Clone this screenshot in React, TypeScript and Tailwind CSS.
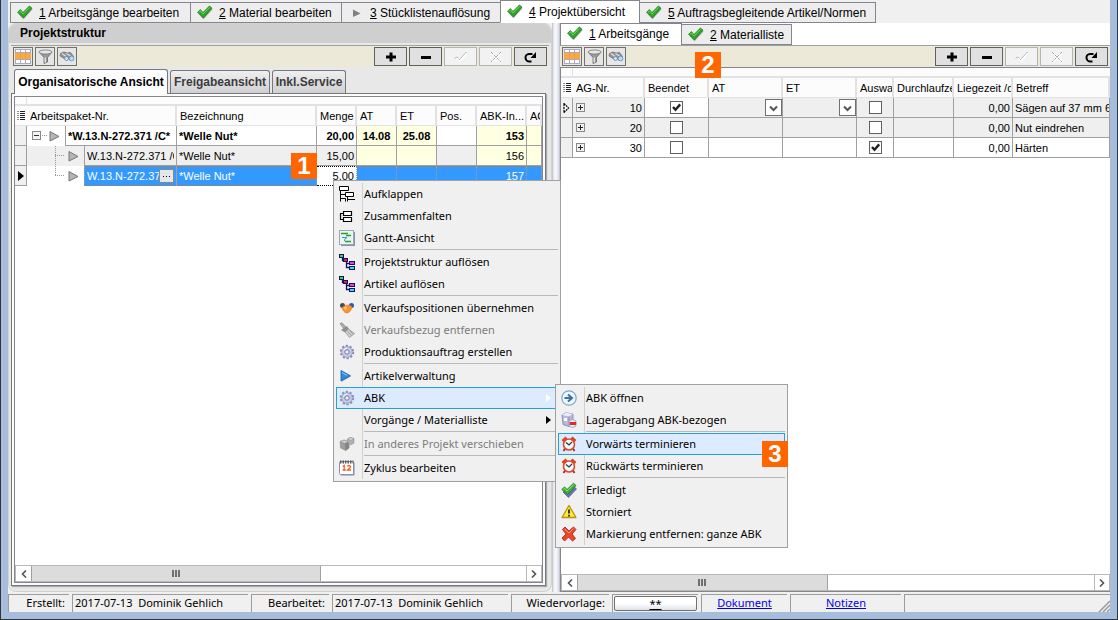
import React from "react";

type Children = { children?: React.ReactNode };

/* ---------- icons ---------- */

const Tick = () => (
  <svg width="16" height="16" viewBox="0 0 16 16" className="shrink-0">
    <path d="M1.500 9 L6.500 14.500 L15.500 4.500 L14 3 Z" fill="#8a8a8a" opacity=".6" />
    <path d="M.6 7.200 L3.400 4.600 L6 7.600 L12.400 1 L15 3.200 L6.400 13 Z" fill="#2fa52a" stroke="#1d7c1a" strokeWidth=".8" />
    <path d="M2 7.200 L3.500 5.900 L6 8.900 L12.500 2.300" fill="none" stroke="#7fdc62" strokeWidth=".9" />
  </svg>
);

const GreyArrow = () => (
  <svg width="16" height="16" viewBox="0 0 16 16" className="shrink-0">
    <path d="M5 4.500 L12.500 8.500 L5 12 Z" fill="#808080" />
  </svg>
);

const GridIcon = () => (
  <svg width="18" height="17" viewBox="0 0 18 17">
    <rect x="1" y="1" width="16" height="15" fill="#fff" />
    <rect x="1" y="5" width="16" height="6" fill="#fba93d" />
    <path d="M1 1.500H17M1 4.500H17M1 11.500H17M1 15.500H17" stroke="#a9a9c4" />
    <path d="M1.500 1V5M6.500 1V5M11.500 1V5M16.500 1V5M1.500 11V16M6.500 11V16M11.500 11V16M16.500 11V16" stroke="#a9a9c4" />
    <path d="M6.500 5V11M11.500 5V11" stroke="#e9a04a" />
  </svg>
);

const FunnelIcon = () => (
  <svg width="18" height="17" viewBox="0 0 18 17">
    <path d="M3 4 L8 9.500 V15.500 L11.500 14 V9.500 L16 4 Z" fill="#9a9a9a" stroke="#666" strokeWidth=".8" />
    <path d="M9.200 9.500 V14.500" stroke="#ededed" strokeWidth="1.300" />
    <ellipse cx="9.500" cy="4" rx="6.500" ry="2" fill="#e6e6e6" stroke="#777" strokeWidth=".8" />
  </svg>
);

const BinocularsIcon = () => (
  <svg width="18" height="17" viewBox="0 0 18 17">
    <path d="M2.500 5.500 L6 4 L9 5 L12.500 4.500 L15.500 8.500 L13 12 L10 10.500 L7 11 L2 8 Z" fill="#8f9498" stroke="#666" strokeWidth=".7" />
    <path d="M4 5.500 L8 8.500 M8.500 5.500 L12.500 8" stroke="#e0e0e0" strokeWidth="1.200" />
    <circle cx="8.500" cy="10.500" r="2" fill="#cfe6fa" stroke="#5d7a98" strokeWidth=".7" />
    <circle cx="13.500" cy="10.500" r="2.400" fill="#b9dcfb" stroke="#5d7a98" strokeWidth=".7" />
  </svg>
);

const PlusIcon = () => (
  <svg width="16" height="16" viewBox="0 0 16 16"><path d="M3 8H13M8 3.500V12.500" stroke="#000" strokeWidth="3" /></svg>
);
const MinusIcon = () => (
  <svg width="16" height="16" viewBox="0 0 16 16"><path d="M3 8.500H13" stroke="#000" strokeWidth="3" /></svg>
);
const CommitIcon = () => (
  <svg width="16" height="16" viewBox="0 0 16 16" fill="none">
    <path d="M3 10 L5 8 L7 12 L14 4" stroke="#fff" strokeWidth="2" />
    <path d="M2 9.500 L4 7.500 L6.500 10.500 L13.500 3" stroke="#9a9a9a" strokeDasharray="2 1" />
  </svg>
);
const CancelIcon = () => (
  <svg width="16" height="16" viewBox="0 0 16 16" fill="none">
    <path d="M4 4 L13 13 M13 4 L4 13" stroke="#fff" strokeWidth="2" />
    <path d="M3 3 L13 13 M13 3 L3 13" stroke="#a4a4a4" strokeDasharray="3 1" />
  </svg>
);
const RefreshIcon = () => (
  <svg width="16" height="16" viewBox="0 0 16 16" fill="none">
    <path d="M8.500 12.500 H6.500 A3.700 3.700 0 0 1 6 5 H9.500" stroke="#000" strokeWidth="2" />
    <path d="M13 3 V9 H7.500 Z" fill="#000" />
  </svg>
);

const ListIcon = () => (
  <svg width="8" height="10" viewBox="0 0 8 10" className="shrink-0">
    <path d="M.5 .5H1.500M.5 2.500H1.500M.5 4.500H1.500M.5 6.500H1.500M.5 8.500H1.500" stroke="#222" />
    <path d="M3 .5H8M3 2.500H8M3 4.500H8M3 6.500H8M3 8.500H8" stroke="#222" />
  </svg>
);

const TreeTriangle = ({ x }: { x: number }) => (
  <path d={`M${x} 5.500 L${x + 9} 10.500 L${x} 15 Z`} fill="#b4b4b4" stroke="#777" />
);

const UnfoldIcon = () => (
  <svg width="16" height="16" viewBox="0 0 16 16" fill="none" stroke="#000">
    <path d="M.5 .5H9.500V4.500H.5ZM6.500 6.500H14.500V10.500H6.500Z" fill="#fff" />
    <path d="M1.500 5V15.500M1.500 8.500H6M2 12.500H6.500V15.500M8.500 11V15.500M8.500 13.500H16" />
  </svg>
);
const FoldIcon = () => (
  <svg width="16" height="16" viewBox="0 0 16 16" fill="none" stroke="#000" strokeWidth="1.200">
    <path d="M4.500 3.500H12.500V7.500H4.500ZM4.500 9.500H12.500V13.500H4.500Z" fill="#fff" />
    <path d="M4 5.500H1.500V11.500H4" />
  </svg>
);
const GanttIcon = () => (
  <svg width="16" height="16" viewBox="0 0 16 16">
    <rect x="2" y="2" width="14" height="14" fill="#8792a4" />
    <rect x=".5" y=".5" width="14" height="14" fill="#eaf4f0" stroke="#9aa8bc" />
    <path d="M2 3.500H9M7 5.500H12M6 11.500H12" stroke="#25a32d" strokeWidth="1.500" />
    <path d="M3 7.500H8L5.500 9.500V11" stroke="#3f8fc4" fill="none" />
  </svg>
);
const TreeIcon = () => (
  <svg width="16" height="16" viewBox="0 0 16 16" stroke="#10106a">
    <path d="M3.500 4V6.500H6M7.500 8V13.500H11M8 9.500H11" fill="none" strokeWidth="1.300" />
    <rect x=".5" y=".5" width="4" height="3" fill="#2ee02e" />
    <rect x="4.500" y="4.500" width="4" height="3" fill="#f02020" />
    <rect x="10.500" y="7.500" width="5" height="3" fill="#f040d0" />
    <rect x="10.500" y="12.500" width="5" height="3" fill="#3adcea" />
  </svg>
);
const PeopleIcon = () => (
  <svg width="16" height="16" viewBox="0 0 16 16">
    <circle cx="3.500" cy="5.500" r="2.500" fill="#4a4a52" />
    <circle cx="12.500" cy="5.500" r="2.500" fill="#3159a8" />
    <path d="M3 7.500C5 5 11 4 13 7C12 11 10 13 7.500 13C5 12.500 3.500 10 3 7.500Z" fill="#f79430" stroke="#d8741c" strokeWidth=".6" />
    <circle cx="6.500" cy="8" r="1.500" fill="#ffc27a" />
  </svg>
);
const BrushIcon = () => (
  <svg width="16" height="16" viewBox="0 0 16 16" stroke="#8a8a8a" strokeWidth=".7">
    <path d="M1 1.500 L3 .8 L7 5 L5 7Z" fill="#aaa" />
    <path d="M2.500 8L8 4.500L9.500 7L6 10Z" fill="#8f8f8f" />
    <path d="M6 10L9.500 7L15.500 11.500L10.500 15.500Z" fill="#cfcfcf" />
    <path d="M8.500 9.500L12.500 13.500M10.500 8.500L14 12" />
  </svg>
);
const GearIcon = () => (
  <svg width="16" height="16" viewBox="0 0 16 16">
    <circle cx="8" cy="8" r="6.200" fill="none" stroke="#8a8fb8" strokeWidth="2" strokeDasharray="2.200 1.690" />
    <circle cx="8" cy="8" r="5.300" fill="#c6cae6" stroke="#8a8fb8" strokeWidth=".7" />
    <circle cx="8" cy="8" r="2.200" fill="#f0f0f0" stroke="#7278a4" />
    <path d="M4.500 6.500A4 4 0 0 1 8 4" stroke="#fff" fill="none" />
  </svg>
);
const PlayIcon = () => (
  <svg width="16" height="16" viewBox="0 0 16 16">
    <path d="M2.500 3.500L12 8.500L2.500 14Z" fill="#bbb" />
    <path d="M2 2.500L11.500 7.800L2 13Z" fill="#2b8be0" stroke="#1b5fa8" strokeWidth=".8" />
    <path d="M3 4.500L8 7.300" stroke="#8fd0ff" />
  </svg>
);
const CubesIcon = () => (
  <svg width="16" height="16" viewBox="0 0 16 16" stroke="#8b8b8b" strokeWidth=".5">
    <path d="M1 5.500L5 4L10 5.500V12L6.500 14.500L1.500 12Z" fill="#9e9e9e" />
    <path d="M1 5.500L5 4L10 5.500L6 7.500Z" fill="#cfcfcf" />
    <path d="M6 7.500L6.500 14.500L10 12V5.500Z" fill="#858585" />
    <path d="M8.500 3L11 1.500L15 2.500V7L12 9L9 7Z" fill="#b0b0b0" />
    <path d="M8.500 3L11 1.500L15 2.500L12 4.500Z" fill="#d6d6d6" />
  </svg>
);
const CalendarIcon = () => (
  <svg width="16" height="16" viewBox="0 0 16 16">
    <rect x="1.500" y="2.500" width="14" height="13" rx="1" fill="#7b84a0" />
    <rect x=".5" y="1.500" width="14" height="13" rx="1" fill="#fff" stroke="#8790ac" />
    <path d="M1 2H14.500" stroke="#555" strokeWidth="3" strokeDasharray="1.500 1" />
    <path d="M3.800 6.500L5.200 5.500V10M3.500 10H6.800M8.500 6.500C9 5 12 5.200 11.500 7.200L8.500 10H12" stroke="#f0601c" strokeWidth="1.300" fill="none" />
  </svg>
);
const OpenIcon = () => (
  <svg width="16" height="16" viewBox="0 0 16 16" fill="none">
    <circle cx="8" cy="8" r="7.200" fill="#eef5fb" stroke="#7da6cd" strokeWidth="1.200" />
    <path d="M3.500 8H11M7 4.500L11 8L7 11.500" stroke="#3f6f9f" strokeWidth="2" />
  </svg>
);
const StockIcon = () => (
  <svg width="16" height="16" viewBox="0 0 16 16">
    <path d="M1 3L5 .8L12 2V11L8 14.500L2 12.500Z" fill="#b6b8dc" stroke="#7c80ae" strokeWidth=".8" />
    <path d="M1 3L8 4.500L12 2L5 .8Z" fill="#ececfa" />
    <path d="M8 4.500V14" stroke="#7c80ae" strokeWidth=".8" />
    <rect x="3" y="6" width="3" height="3" fill="#fff" />
    <circle cx="11.500" cy="11.500" r="4" fill="#e6e6f6" stroke="#8c90b8" strokeWidth=".7" />
    <rect x="8.500" y="10" width="6.500" height="3" fill="#dc2c1c" />
  </svg>
);
const ClockIcon = () => (
  <svg width="16" height="16" viewBox="0 0 16 16" fill="none">
    <path d="M1.500 5L5.500 1.500M14.500 5L10.500 1.500" stroke="#e2401c" strokeWidth="2.800" />
    <path d="M4 12.500L2.500 15M12 12.500L13.500 15" stroke="#a82a18" strokeWidth="1.800" />
    <circle cx="8" cy="8.500" r="5.500" fill="#f4fbff" stroke="#dc4a2a" strokeWidth="1.600" />
    <path d="M5 6.500L8 9L11 6" stroke="#333" strokeWidth="1.200" />
  </svg>
);
const DoneIcon = () => (
  <svg width="16" height="16" viewBox="0 0 16 16">
    <path d="M2 10L4.500 8L7 11L13.500 5L15.500 7L7.500 15.500Z" fill="#6a74b4" stroke="#444c8c" strokeWidth=".6" />
    <path d="M.8 7.500L3.500 4.800L6 7.500L12.500 1.200L15 3.600L6.500 12.500Z" fill="#3fb335" stroke="#1f7c1c" strokeWidth=".8" />
    <path d="M2.200 7.300L3.500 6.200L6 9L12.500 2.700" fill="none" stroke="#8ee070" />
  </svg>
);
const WarningIcon = () => (
  <svg width="16" height="16" viewBox="0 0 16 16">
    <path d="M8 1.500L15 13.500H1Z" fill="#ffe640" stroke="#b8980c" strokeWidth="1.300" strokeLinejoin="round" />
    <path d="M8 5.500V9.500M8 10.800V12.500" stroke="#222" strokeWidth="1.700" />
  </svg>
);
const CrossIcon = () => (
  <svg width="16" height="16" viewBox="0 0 16 16">
    <path d="M4 1L8 5L12.500 1L15 3.500L11 8L14.500 12.500L11.500 15L7.500 11L3.500 15L1 12L5 8L1.500 3.500Z" fill="#ee4428" stroke="#b0261a" strokeWidth=".9" />
    <path d="M3.500 3L8 7L12.500 2.500" stroke="#ff9c80" fill="none" />
  </svg>
);

/* ---------- shared pieces ---------- */

const Badge = ({ children, className }: Children & { className: string }) => (
  <span
    className={`absolute z-30 flex h-[26px] w-[26px] items-center justify-center bg-[#ff6600] font-['Liberation_Sans',Arial,sans-serif] text-[24px] leading-none font-bold text-white ${className}`}
  >
    {children}
  </span>
);

function PageTab({ n, label, active, grey, className }: { n: string; label: string; active?: boolean; grey?: boolean; className: string }) {
  return (
    <button
      role="tab"
      aria-selected={!!active}
      className={`-ml-px flex shrink-0 items-center gap-1.5 border border-[#85858f] pl-1.5 text-left text-[12px] whitespace-nowrap first:ml-0 ${
        active ? "h-full border-b-white bg-white" : "h-[21px] bg-[#ededed]"
      } ${className}`}
    >
      {grey ? <GreyArrow /> : <Tick />}
      <span>
        <u>{n}</u> {label}
      </span>
    </button>
  );
}

function Toolbar() {
  const small = "flex h-[19px] w-5 items-center justify-center border border-[#707070] bg-[#e6e6e6]";
  const wide = "flex h-[19px] w-[33px] items-center justify-center border border-[#606060] bg-[#e0e0e0]";
  const off = "flex h-[19px] w-[33px] items-center justify-center border border-[#b4b4b4] bg-[#f2f2f2]";
  return (
    <div role="toolbar" className="flex h-[22px] shrink-0 items-center justify-between border-t border-[#a0a0a0] bg-[#ece9d8] px-0.5">
      <div className="flex gap-0.5">
        <button aria-label="Spalten" className={small}><GridIcon /></button>
        <button aria-label="Filter" className={small}><FunnelIcon /></button>
        <button aria-label="Suchen" className={small}><BinocularsIcon /></button>
      </div>
      <div className="flex gap-0.5">
        <button aria-label="Hinzufügen" className={wide}><PlusIcon /></button>
        <button aria-label="Löschen" className={wide}><MinusIcon /></button>
        <button aria-label="Übernehmen" disabled className={off}><CommitIcon /></button>
        <button aria-label="Abbrechen" disabled className={off}><CancelIcon /></button>
        <button aria-label="Aktualisieren" className={wide}><RefreshIcon /></button>
      </div>
    </div>
  );
}

function ScrollBar({ thumb }: { thumb: string }) {
  const end = "flex w-4 shrink-0 items-center justify-center border-[#b8b8b8]";
  return (
    <div className="mt-auto flex h-[17px] shrink-0 border-y border-[#b8b8b8] bg-white">
      <button aria-label="Nach links" className={`${end} border-l`}>
        <svg width="6" height="8" viewBox="0 0 6 8"><path d="M5 .5L1.500 4L5 7.500" fill="none" stroke="#555" strokeWidth="1.600" /></svg>
      </button>
      <div className="flex-1">
        <div className={`flex h-full items-center justify-center gap-px border-x border-[#a0a0a0] bg-[#dcdcdc] ${thumb}`}>
          <i className="h-[7px] w-0.5 bg-[#707070]" />
          <i className="h-[7px] w-0.5 bg-[#707070]" />
          <i className="h-[7px] w-0.5 bg-[#707070]" />
        </div>
      </div>
      <button aria-label="Nach rechts" className={`${end} border-x`}>
        <svg width="6" height="8" viewBox="0 0 6 8"><path d="M1 .5L4.500 4L1 7.500" fill="none" stroke="#555" strokeWidth="1.600" /></svg>
      </button>
    </div>
  );
}

const Head = ({ children }: Children) => (
  <th className="h-5 border-r-2 border-b border-r-[#e2e2e2] border-b-[#e2e2e2] bg-[#fcfcfc] py-0 pr-0 pl-[3px] text-left font-normal">
    <div className="overflow-hidden whitespace-nowrap">{children}</div>
  </th>
);

const MarkerHead = () => (
  <th aria-label="Markierung" className="h-5 border-b border-[#e2e2e2] bg-[#fcfcfc] py-0 pr-0 pl-0.5 text-left">
    <ListIcon />
  </th>
);

const cell = "h-5 overflow-hidden border-r border-b border-[#a0a0a0] whitespace-nowrap";

const Cell = ({ children, className = "" }: Children & { className?: string }) => (
  <td className={`${cell} ${className}`}>{children}</td>
);

/* ---------- left side ---------- */

function TreeCell({ level, text, last, bg, className }: { level: 0 | 1; text: React.ReactNode; last?: boolean; bg: string; className: string }) {
  return (
    <td className={`h-5 overflow-hidden border-r border-[#a0a0a0] p-0 ${bg}`}>
      <div className="flex h-5">
        <svg width={level ? 57 : 38} height="20" viewBox={level ? "0 0 57 20" : "0 0 38 20"} fill="none" className="shrink-0">
          {level === 0 ? (
            <>
              <rect x="5.500" y="5.500" width="8" height="8" fill="#f4f4f4" stroke="#8a8a8a" />
              <path d="M7 9.500H12" stroke="#333" />
              <path d="M15 9.500H20" stroke="#999" strokeDasharray="1 1" />
              <TreeTriangle x={23} />
            </>
          ) : (
            <>
              <path d={last ? "M28.500 0V10M28 9.500H38" : "M28.500 0V20M28 9.500H38"} stroke="#999" strokeDasharray="1 1" />
              <TreeTriangle x={42} />
            </>
          )}
        </svg>
        <div className={`flex h-5 min-w-0 flex-1 items-center border-b border-l border-[#a0a0a0] px-0.5 ${className}`}>
          <div className="min-w-0 flex-1 overflow-hidden whitespace-nowrap">{text}</div>
          {last && (
            <button aria-label="Auswählen" className="flex h-3.5 w-[15px] shrink-0 items-center justify-center gap-0.5 border border-[#888] bg-[#e6e6e6]">
              <i className="h-px w-px bg-black" />
              <i className="h-px w-px bg-black" />
              <i className="h-px w-px bg-black" />
            </button>
          )}
        </div>
      </div>
    </td>
  );
}

function StructureTable() {
  const y = "bg-[#ffffe1]";
  const sel = "border-y border-t-[#c07830] border-b-[#c07830] border-dotted bg-[#3399ff] text-white";
  return (
    <table className="w-full min-w-[526px] table-fixed border-separate border-spacing-0 text-[11px] leading-[18px]">
      <colgroup>
        <col className="w-[12px]" />
        <col className="w-[150px]" />
        <col className="w-[140px]" />
        <col className="w-[40px]" />
        <col className="w-[40px]" />
        <col className="w-[40px]" />
        <col className="w-[40px]" />
        <col className="w-[50px]" />
        <col />
      </colgroup>
      <thead>
        <tr>
          <MarkerHead />
          <Head>Arbeitspaket-Nr.</Head>
          <Head>Bezeichnung</Head>
          <Head>Menge</Head>
          <Head>AT</Head>
          <Head>ET</Head>
          <Head>Pos.</Head>
          <Head>ABK-In...</Head>
          <Head>AG</Head>
        </tr>
      </thead>
      <tbody>
        <tr className="font-bold">
          <Cell className="bg-[#f0f0f0]" />
          <TreeCell level={0} text="*W.13.N-272.371 /C*" bg="bg-white" className="" />
          <Cell className="pl-0.5">*Welle Nut*</Cell>
          <Cell className="pr-0.5 text-right">20,00</Cell>
          <Cell className={`text-center ${y}`}>14.08</Cell>
          <Cell className={`text-center ${y}`}>25.08</Cell>
          <Cell />
          <Cell className={`pr-0.5 text-right ${y}`}>153</Cell>
          <Cell className={y} />
        </tr>
        <tr className="bg-[#efefef]">
          <Cell className="bg-[#f0f0f0]" />
          <TreeCell level={1} text="W.13.N-272.371 /C" bg="bg-[#efefef]" className="" />
          <Cell className="pl-0.5">*Welle Nut*</Cell>
          <Cell className="pr-0.5 text-right">15,00</Cell>
          <Cell className={y} />
          <Cell className={y} />
          <Cell />
          <Cell className={`pr-0.5 text-right ${y}`}>156</Cell>
          <Cell className={y} />
        </tr>
        <tr>
          <Cell className="bg-[#f0f0f0]">
            <svg width="6" height="10" viewBox="0 0 6 10" className="mx-auto"><path d="M0 0L6 5L0 10Z" fill="#000" /></svg>
          </Cell>
          <TreeCell
            level={1}
            last
            bg="bg-white"
            className="border-y border-y-[#c07830] border-dotted bg-[#3399ff] text-white"
            text="W.13.N-272.37"
          />
          <Cell className={`pl-0.5 ${sel}`}>*Welle Nut*</Cell>
          <Cell className="border-y border-dotted border-t-black border-b-black bg-white pr-0.5 text-right">5,00</Cell>
          <Cell className={sel} />
          <Cell className={sel} />
          <Cell className={sel} />
          <Cell className={`pr-0.5 text-right ${sel}`}>157</Cell>
          <Cell className={sel} />
        </tr>
      </tbody>
    </table>
  );
}

function StructurePanel() {
  const tab = "h-[23px] rounded-t-[3px] border border-b-0 border-[#77777f] bg-linear-to-b from-[#efefef] to-[#d0d0d4] text-[12px] font-bold whitespace-nowrap text-[#3c3c3c]";
  return (
    <section className="flex w-[544px] shrink-0 flex-col rounded-lg border border-[#d2d2d2] bg-[#e8e8e8] px-0.5 pb-[5px]">
      <h2 className="-mx-0.5 flex h-[19px] shrink-0 items-center rounded-t-lg bg-[#cfcfcf] pb-0.5 pl-[11px] text-[12px] font-bold">Projektstruktur</h2>
      <div className="mt-0.5 flex flex-1 flex-col">
        <Toolbar />
        <div role="tablist" className="mt-0.5 flex h-6 shrink-0 items-end gap-0.5 pl-[3px]">
          <button role="tab" aria-selected className="relative -mb-px h-[25px] w-[154px] rounded-t-[3px] border border-b-0 border-[#77777f] bg-[#fcfcfc] text-[12px] font-bold whitespace-nowrap">
            Organisatorische Ansicht
          </button>
          <button role="tab" aria-selected={false} className={`${tab} w-[100px]`}>Freigabeansicht</button>
          <button role="tab" aria-selected={false} className={`${tab} w-[74px]`}>Inkl.Service</button>
        </div>
        <div className="mr-[3px] flex flex-1 flex-col border border-[#77777f] bg-[#fcfcfc] p-0.5 shadow-[1px_1px_1px_#aaa]">
          <div className="flex flex-1 flex-col overflow-hidden border border-[#85858f] bg-white">
            <div className="flex h-[9px] shrink-0 border-b-2 border-[#e2e2e2] bg-[#fcfcfc]">
              <div className="w-[12px] border-r border-[#e2e2e2]" />
            </div>
            <StructureTable />
            <ScrollBar thumb="w-[58.5%]" />
          </div>
        </div>
      </div>
    </section>
  );
}

/* ---------- right side ---------- */

const Check = ({ label, on }: { label: string; on?: boolean }) => (
  <span className="relative mx-auto flex h-[13px] w-[13px]">
    <input
      type="checkbox"
      aria-label={label}
      defaultChecked={on}
      className="peer h-[13px] w-[13px] appearance-none border border-[#606060] bg-white"
    />
    <svg width="13" height="13" viewBox="0 0 13 13" className="pointer-events-none absolute inset-0 hidden peer-checked:block">
      <path d="M3 6L5.500 8.800L10.200 3.400" fill="none" stroke="#222" strokeWidth="2.400" />
    </svg>
  </span>
);

const DateDrop = ({ label }: { label: string }) => (
  <span className="relative ml-auto flex h-[17px] w-[17px]">
    <select aria-label={label} className="h-[17px] w-[17px] appearance-none border border-[#707070] bg-white text-transparent">
      <option />
    </select>
    <svg width="17" height="17" viewBox="0 0 17 17" className="pointer-events-none absolute inset-0">
      <path d="M5 7.500L8.500 11L12 7.500" fill="none" stroke="#555" strokeWidth="2" />
    </svg>
  </span>
);

const operations = [
  { nr: "10", done: true, pick: false, text: "Sägen auf 37 mm 6", bg: "bg-[#efefef]" },
  { nr: "20", done: false, pick: false, text: "Nut eindrehen", bg: "bg-[#efefef]" },
  { nr: "30", done: false, pick: true, text: "Härten", bg: "bg-white" },
];

function OperationsTable() {
  return (
    <table className="w-full min-w-[540px] table-fixed border-separate border-spacing-0 text-[11px] leading-[18px]">
      <colgroup>
        <col className="w-[12px]" />
        <col className="w-[72px]" />
        <col className="w-[64px]" />
        <col className="w-[74px]" />
        <col className="w-[74px]" />
        <col className="w-[37px]" />
        <col className="w-[60px]" />
        <col className="w-[59px]" />
        <col />
      </colgroup>
      <thead>
        <tr>
          <MarkerHead />
          <Head>AG-Nr.</Head>
          <Head>Beendet</Head>
          <Head>AT</Head>
          <Head>ET</Head>
          <Head>Auswa</Head>
          <Head>Durchlaufze</Head>
          <Head>Liegezeit /d</Head>
          <Head>Betreff</Head>
        </tr>
      </thead>
      <tbody>
        {operations.map((o, i) => (
          <tr key={o.nr} className={o.bg}>
            <Cell className="bg-[#f0f0f0]">
              {i === 0 && (
                <svg width="7" height="10" viewBox="0 0 7 10" className="mx-auto"><path d="M1 .5L5.500 5L1 9.500Z" fill="#fff" stroke="#000" strokeWidth="1.200" strokeDasharray="2 .7" /></svg>
              )}
            </Cell>
            <Cell>
              <div className="flex items-center justify-between pr-0.5 pl-[3px]">
                <button aria-label={`Arbeitsgang ${o.nr} aufklappen`}>
                  <svg width="9" height="9" viewBox="0 0 9 9"><rect x=".5" y=".5" width="8" height="8" fill="#f0f0f0" stroke="#8a8a8a" /><path d="M2 4.500H7M4.500 2V7" stroke="#222" /></svg>
                </button>
                {o.nr}
              </div>
            </Cell>
            <Cell className={i === 0 ? "bg-white" : ""}><Check label={`Beendet ${o.nr}`} on={o.done} /></Cell>
            <Cell>{i === 0 && <DateDrop label="AT" />}</Cell>
            <Cell>{i === 0 && <DateDrop label="ET" />}</Cell>
            <Cell><Check label={`Auswahl ${o.nr}`} on={o.pick} /></Cell>
            <Cell />
            <Cell className="pr-0.5 text-right">0,00</Cell>
            <Cell className="pl-0.5">{o.text}</Cell>
          </tr>
        ))}
      </tbody>
    </table>
  );
}

function OperationsPanel() {
  return (
    <section className="relative flex min-w-0 flex-1 flex-col bg-white">
      <div role="tablist" className="flex h-[22px] shrink-0 items-end border-l border-[#85858f]">
        <PageTab n="1" label="Arbeitsgänge" active className="w-[121px] border-l-0" />
        <PageTab n="2" label="Materialliste" className="w-[111px]" />
      </div>
      <Toolbar />
      <div className="flex flex-1 flex-col overflow-hidden border border-r-0 border-[#85858f]">
        <div className="flex h-[10px] shrink-0 border-b-2 border-[#e2e2e2] bg-[#fcfcfc]">
          <div className="w-[12px] border-r border-[#e2e2e2]" />
        </div>
        <OperationsTable />
        <ScrollBar thumb="w-[48.5%]" />
      </div>
      <Badge className="top-[29px] left-[135px]">2</Badge>
    </section>
  );
}

/* ---------- context menu ---------- */

function Item({ icon, label, off, hot, sub, white }: { icon?: React.ReactNode; label: string; off?: boolean; hot?: boolean; sub?: boolean; white?: boolean }) {
  return (
    <button
      role="menuitem"
      disabled={off}
      className={`flex h-[22px] w-full items-center border text-left whitespace-nowrap ${
        hot ? "border-[#26a0da] bg-[#dcebff]" : "border-transparent"
      } ${off ? "text-[#7c7c7c]" : "text-black"}`}
    >
      <span className="flex w-[27px] shrink-0 pl-0.5">{icon}</span>
      <span className="flex-1">{label}</span>
      {sub && (
        <svg width="5" height="8" viewBox="0 0 5 8" className="mr-1.5"><path d="M0 0L5 4L0 8Z" fill={white ? "#fff" : "#000"} /></svg>
      )}
    </button>
  );
}

const Rule = () => <div role="separator" className="ml-7 h-0.5 border-t border-[#b9b9b9]" />;

const menuBox = "absolute border border-[#a0a0a0] bg-[#f0f0f0] bg-linear-to-r from-[#d0d0d0] to-[#d0d0d0] bg-[size:1px_calc(100%-4px)] bg-[position:28px_2px] bg-no-repeat p-0.5 font-['Noto_Sans','Open_Sans',sans-serif] text-[11px] leading-5";

function ContextMenu() {
  return (
    <div role="menu" className={`${menuBox} top-[180px] left-[332px] z-10 w-[228px]`}>
      <Item icon={<UnfoldIcon />} label="Aufklappen" />
      <Item icon={<FoldIcon />} label="Zusammenfalten" />
      <Item icon={<GanttIcon />} label="Gantt-Ansicht" />
      <Rule />
      <Item icon={<TreeIcon />} label="Projektstruktur auflösen" />
      <Item icon={<TreeIcon />} label="Artikel auflösen" />
      <Rule />
      <Item icon={<PeopleIcon />} label="Verkaufspositionen übernehmen" />
      <Item icon={<BrushIcon />} label="Verkaufsbezug entfernen" off />
      <Item icon={<GearIcon />} label="Produktionsauftrag erstellen" />
      <Rule />
      <Item icon={<PlayIcon />} label="Artikelverwaltung" />
      <Item icon={<GearIcon />} label="ABK" hot sub white />
      <Item label="Vorgänge / Materialliste" sub />
      <Rule />
      <Item icon={<CubesIcon />} label="In anderes Projekt verschieben" off />
      <Rule />
      <Item icon={<CalendarIcon />} label="Zyklus bearbeiten" />
      <div role="menu" className={`${menuBox} top-[203px] left-[221px] z-20 w-[233px]`}>
        <Item icon={<OpenIcon />} label="ABK öffnen" />
        <Item icon={<StockIcon />} label="Lagerabgang ABK-bezogen" />
        <Rule />
        <Item icon={<ClockIcon />} label="Vorwärts terminieren" hot />
        <Item icon={<ClockIcon />} label="Rückwärts terminieren" />
        <Rule />
        <Item icon={<DoneIcon />} label="Erledigt" />
        <Item icon={<WarningIcon />} label="Storniert" />
        <Item icon={<CrossIcon />} label="Markierung entfernen: ganze ABK" />
        <Badge className="top-14 -right-px">3</Badge>
      </div>
    </div>
  );
}

/* ---------- status bar ---------- */

function StatusBar() {
  const box = "flex h-[18px] shrink-0 items-center border-t border-l border-[#9c9c9c] whitespace-nowrap";
  return (
    <footer className="flex h-5 shrink-0 items-end gap-[3px] bg-[#f0f0f0] font-['Noto_Sans','Open_Sans',sans-serif] text-[11px]">
      <div className={`${box} w-[61px] justify-end pr-1`}>Erstellt:</div>
      <div className={`${box} w-[176px] pl-0.5`}>2017-07-13&nbsp; Dominik Gehlich</div>
      <div className={`${box} w-[78px] justify-end pr-1`}>Bearbeitet:</div>
      <div className={`${box} w-[176px] pl-0.5`}>2017-07-13&nbsp; Dominik Gehlich</div>
      <div className={`${box} w-[98px] justify-end pr-1`}>Wiedervorlage:</div>
      <div className={`${box} w-[86px] pl-px`}>
        <button className="flex h-[15px] w-[83px] items-center justify-center rounded-[2px] border border-[#707070] bg-linear-to-b from-white from-50% to-[#dde3ec] leading-none underline">**</button>
      </div>
      <div className={`${box} w-[86px] justify-center`}><a href="#dokument" className="text-[#0000ee] underline">Dokument</a></div>
      <div className={`${box} w-[111px] justify-center`}><a href="#notizen" className="text-[#0000ee] underline">Notizen</a></div>
      <div className="flex h-[18px] flex-1 items-end justify-end border-t border-l border-[#9c9c9c]">
        <svg width="12" height="12" viewBox="0 0 12 12"><path d="M1 12L12 1M5 12L12 5M9 12L12 9" stroke="#9a9a9a" strokeWidth="1.500" /></svg>
      </div>
    </footer>
  );
}

export default function App() {
  return (
    <div className="relative flex min-h-screen flex-col border-x border-b border-[#30343a] bg-[#a6bedc] px-[7px] pb-[7px] font-['Liberation_Sans',Arial,sans-serif] text-black">
      <div className="flex flex-1 flex-col bg-[#f0f0f0]">
        <div role="tablist" className="flex h-[23px] shrink-0 items-end pl-0.5">
          <PageTab n="1" label="Arbeitsgänge bearbeiten" className="w-[181px]" />
          <PageTab n="2" label="Material bearbeiten" className="w-[152px]" />
          <PageTab n="3" label="Stücklistenauflösung" grey className="w-[160px]" />
          <PageTab n="4" label="Projektübersicht" active className="w-[140px]" />
          <PageTab n="5" label="Auftragsbegleitende Artikel/Normen" className="w-[237px]" />
        </div>
        <main className="flex flex-1">
          <StructurePanel />
          <div className="w-2 shrink-0 border-x border-[#c4c8d4] bg-linear-to-r from-[#e4e4e8] via-[#fafafc] to-[#d8dae2]" />
          <OperationsPanel />
        </main>
        <StatusBar />
      </div>
      <Badge className="top-[153px] left-[290px]">1</Badge>
      <ContextMenu />
    </div>
  );
}
